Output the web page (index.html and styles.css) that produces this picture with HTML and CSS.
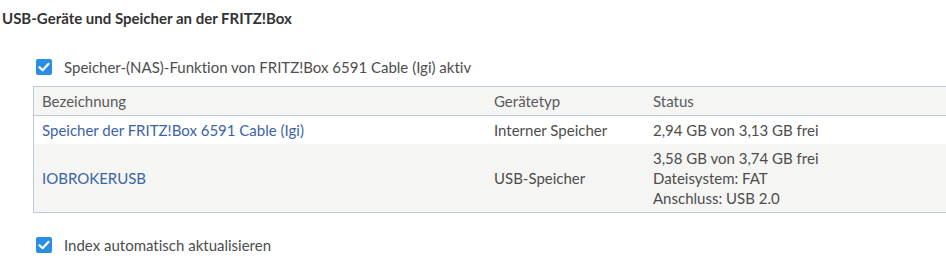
FILE: index.html
```html
<!DOCTYPE html>
<html lang="de">
<head>
<meta charset="utf-8">
<link rel="stylesheet" href="styles.css">
</head>
<body>
<h2 class="title">USB-Geräte und Speicher an der FRITZ!Box</h2>
<div class="option first">
  <span class="cb"><svg viewBox="0 0 16 16" width="16" height="16"><rect x="0" y="0" width="16" height="16" rx="2" fill="#2b8de4"/><path d="M3.5 8.2 L6.6 11.2 L12.6 4.8" fill="none" stroke="#fff" stroke-width="2.2" stroke-linecap="round" stroke-linejoin="round"/></svg></span>
  <span class="label">Speicher-(NAS)-Funktion von FRITZ!Box 6591 Cable (Igi) aktiv</span>
</div>
<table class="devices">
  <thead>
    <tr><th class="c1">Bezeichnung</th><th class="c2">Gerätetyp</th><th class="c3">Status</th></tr>
  </thead>
  <tbody>
    <tr class="white"><td class="c1"><a href="#">Speicher der FRITZ!Box 6591 Cable (Igi)</a></td><td class="c2">Interner Speicher</td><td class="c3">2,94 GB von 3,13 GB frei</td></tr>
    <tr class="grey"><td class="c1"><a href="#">IOBROKERUSB</a></td><td class="c2">USB-Speicher</td><td class="c3">3,58 GB von 3,74 GB frei<br>Dateisystem: FAT<br>Anschluss: USB 2.0</td></tr>
  </tbody>
</table>
<div class="option second">
  <span class="cb"><svg viewBox="0 0 16 16" width="16" height="16"><rect x="0" y="0" width="16" height="16" rx="2" fill="#2b8de4"/><path d="M3.5 8.2 L6.6 11.2 L12.6 4.8" fill="none" stroke="#fff" stroke-width="2.2" stroke-linecap="round" stroke-linejoin="round"/></svg></span>
  <span class="label">Index automatisch aktualisieren</span>
</div>
</body>
</html>
```
FILE: styles.css
```css
html, body {
  margin: 0;
  padding: 0;
  overflow: hidden;
  background: #fff;
}
body {
  font-family: Lato, "Open Sans", sans-serif;
  font-size: 15px;
  line-height: 20px;
  color: #4d4d4d;
  font-variant-ligatures: none;
  font-feature-settings: "liga" 0, "clig" 0;
}
.title {
  margin: 0;
  padding: 8px 0 0 2px;
  font-size: 15px;
  line-height: 20px;
  font-weight: bold;
  color: #333;
}
.option {
  display: flex;
  align-items: center;
  gap: 12px;
  padding-left: 36px;
  height: 20px;
}
.option.first { margin-top: 29px; }
.option.second { margin-top: 22px; }
.cb { display: flex; width: 16px; height: 16px; }
.devices {
  margin: 9px 0 0 33px;
  width: 960px;
  border-collapse: collapse;
  border-top: 1px solid #b9cbd8;
  border-bottom: 1px solid #b9cbd8;
  border-left: 1px solid #b9cbd8;
}
.devices th, .devices td {
  text-align: left;
  vertical-align: middle;
  padding: 4px 8px;
  font-weight: normal;
}
.devices thead tr {
  background: #f5f5f4;
  border-bottom: 1px solid #b9cbd8;
}
.devices th { color: #5a5a5a; height: 19px; }
.devices .c1 { width: 436px; }
.devices .c2 { width: 143px; }
.white { background: #fff; }
.grey { background: #f5f5f4; }
.devices a { color: #3b64a7; text-decoration: none; }
```
